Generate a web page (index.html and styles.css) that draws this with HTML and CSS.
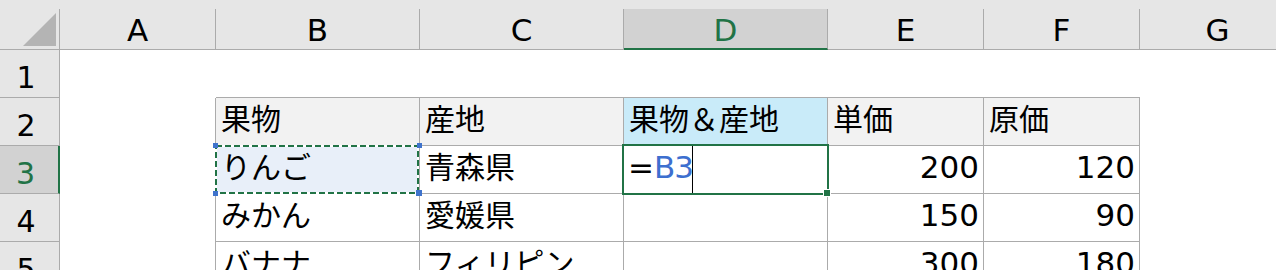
FILE: index.html
```html
<!DOCTYPE html>
<html lang="ja">
<head>
<meta charset="utf-8">
<title>Sheet</title>
<link rel="stylesheet" href="styles.css">
</head>
<body>
<div class="sheet">
  <div class="colhead">
    <div class="corner"><svg class="corner-tri" width="59" height="40" viewBox="0 0 59 40"><polygon points="23,37 56,37 56,4" fill="#b4b4b4"/></svg></div>
    <div class="ch">A</div>
    <div class="ch">B</div>
    <div class="ch">C</div>
    <div class="ch ch-sel">D</div>
    <div class="ch">E</div>
    <div class="ch">F</div>
    <div class="ch">G</div>
  </div>
  <div class="grid">
    <div class="rh">1</div>
    <div class="c"></div>
    <div class="c top"></div>
    <div class="c top"></div>
    <div class="c top"></div>
    <div class="c top"></div>
    <div class="c top"></div>
    <div class="c"></div>

    <div class="rh">2</div>
    <div class="c edge"></div>
    <div class="c t hd jp">果物</div>
    <div class="c t hd jp">産地</div>
    <div class="c t hl jp">果物＆産地</div>
    <div class="c t hd jp">単価</div>
    <div class="c t hd jp">原価</div>
    <div class="c"></div>

    <div class="rh rh-sel">3</div>
    <div class="c edge"></div>
    <div class="c t jp ref">りんご<svg class="ants" width="204" height="49" viewBox="0 0 204 49"><rect x="1" y="1" width="202" height="47" fill="none" stroke="#ffffff" stroke-width="2"/><rect x="1" y="1" width="202" height="47" fill="none" stroke="#217346" stroke-width="2" stroke-dasharray="6 3"/><rect x="-2" y="-2" width="5" height="5" fill="#3f73cc"/><rect x="202" y="-2" width="5" height="5" fill="#3f73cc"/><rect x="-2" y="46" width="5" height="5" fill="#3f73cc"/><rect x="201" y="45" width="6" height="6" fill="#3f73cc"/></svg></div>
    <div class="c t jp">青森県</div>
    <div class="c t edit"><span class="eq">=</span><span class="refname">B3</span><span class="caret"></span><div class="selbox"></div><div class="handle"></div></div>
    <div class="c t num">200</div>
    <div class="c t num">120</div>
    <div class="c"></div>

    <div class="rh">4</div>
    <div class="c edge"></div>
    <div class="c t jp">みかん</div>
    <div class="c t jp">愛媛県</div>
    <div class="c t"></div>
    <div class="c t num">150</div>
    <div class="c t num">90</div>
    <div class="c"></div>

    <div class="rh">5</div>
    <div class="c edge"></div>
    <div class="c t jp">バナナ</div>
    <div class="c t jp">フィリピン</div>
    <div class="c t"></div>
    <div class="c t num">300</div>
    <div class="c t num">180</div>
    <div class="c"></div>
  </div>
</div>
</body>
</html>
```
FILE: styles.css
```css
html, body {
  margin: 0;
  padding: 0;
  background: #ffffff;
}
body {
  overflow: hidden;
}
.sheet {
  width: 1276px;
  height: 270px;
  overflow: hidden;
  color: #000000;
}
.colhead {
  display: grid;
  grid-template-columns: 60px 156px 204px 204px 204px 156px 156px 156px;
  padding-top: 9px;
  background: #e6e6e6;
}
.corner,
.ch {
  height: 41px;
  box-sizing: border-box;
  border-right: 1px solid #ababab;
  border-bottom: 1px solid #ababab;
}
.corner-tri {
  display: block;
}
.ch {
  font: 31px/31px "DejaVu Sans", sans-serif;
  text-align: center;
  padding-top: 6px;
}
.ch-sel {
  background: #d2d2d2;
  color: #217346;
  border-bottom: 2px solid #217346;
}
.grid {
  display: grid;
  grid-template-columns: 60px 156px 204px 204px 204px 156px 156px 156px;
  grid-auto-rows: 48px;
}
.rh {
  box-sizing: border-box;
  background: #e6e6e6;
  border-right: 1px solid #ababab;
  border-bottom: 1px solid #ababab;
  font: 30px/30px "DejaVu Sans", sans-serif;
  text-align: center;
  padding: 13px 7px 0 0;
}
.rh-sel {
  background: #d2d2d2;
  color: #217346;
  border-right: 2px solid #217346;
}
.c {
  box-sizing: border-box;
  white-space: nowrap;
  overflow: visible;
}
.top {
  border-bottom: 1px solid #ababab;
}
.edge {
  border-right: 1px solid #ababab;
}
.t {
  border-right: 1px solid #ababab;
  border-bottom: 1px solid #ababab;
}
.jp {
  font: 30px/30px "Noto Sans CJK JP", sans-serif;
  padding: 4px 0 0 5px;
}
.num {
  font: 31px/31px "DejaVu Sans", sans-serif;
  text-align: right;
  padding: 6px 4px 0 0;
}
.hd {
  background: #f2f2f2;
}
.hl {
  background: #c9ebf9;
}
.ref {
  position: relative;
  background: #e8eff9;
}
.ants {
  position: absolute;
  left: -1px;
  top: -1px;
  overflow: visible;
  z-index: 2;
}
.edit {
  position: relative;
  display: flex;
  align-items: flex-start;
  font: 31px/31px "DejaVu Sans", sans-serif;
  padding: 6px 0 0 4px;
}
.refname {
  color: #3d6fcf;
  letter-spacing: -1px;
}
.caret {
  width: 1px;
  height: 48px;
  margin-top: -7px;
  margin-left: -1px;
  background: #000000;
}
.selbox {
  position: absolute;
  left: -2px;
  top: -2px;
  width: 207px;
  height: 51px;
  box-sizing: border-box;
  border: 2px solid #217346;
  z-index: 2;
}
.handle {
  position: absolute;
  left: 199px;
  top: 43px;
  width: 6px;
  height: 6px;
  background: #217346;
  border: 1px solid #ffffff;
  z-index: 3;
}
```
